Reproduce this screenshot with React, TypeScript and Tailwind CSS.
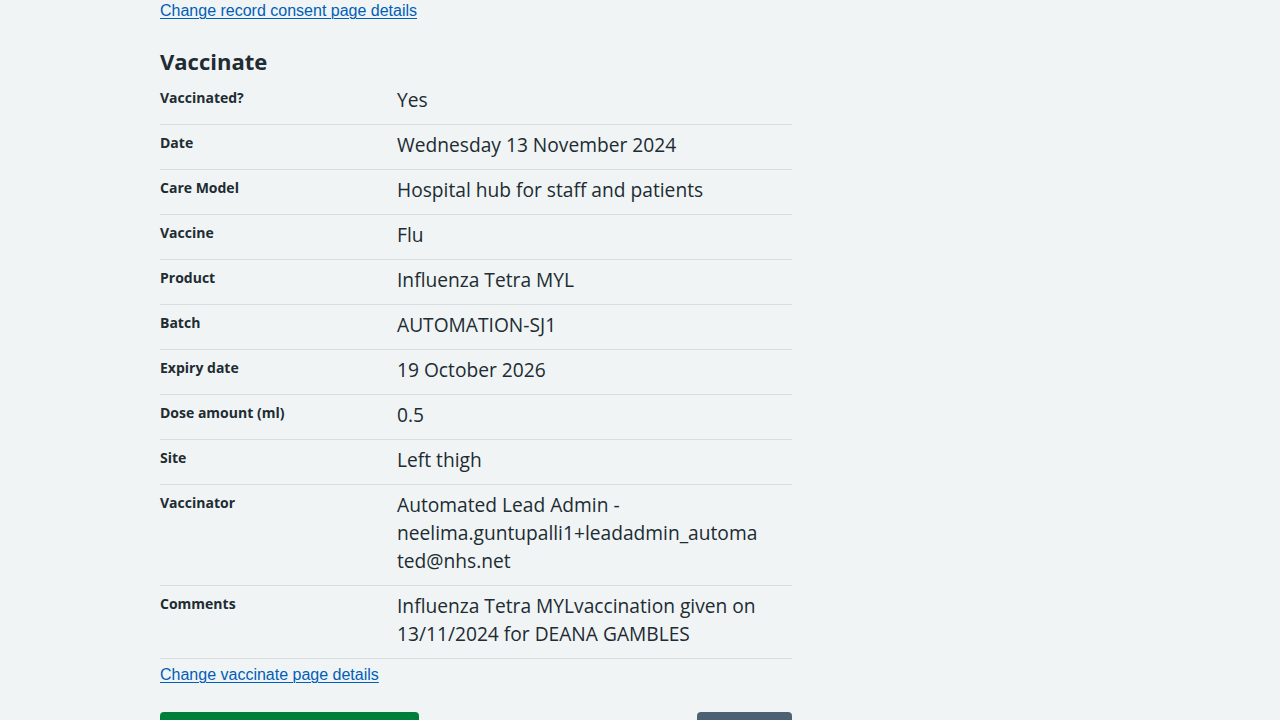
const rows: { label: string; value: string[] }[] = [
  { label: "Vaccinated?", value: ["Yes"] },
  { label: "Date", value: ["Wednesday 13 November 2024"] },
  { label: "Care Model", value: ["Hospital hub for staff and patients"] },
  { label: "Vaccine", value: ["Flu"] },
  { label: "Product", value: ["Influenza Tetra MYL"] },
  { label: "Batch", value: ["AUTOMATION-SJ1"] },
  { label: "Expiry date", value: ["19 October 2026"] },
  { label: "Dose amount (ml)", value: ["0.5"] },
  { label: "Site", value: ["Left thigh"] },
  {
    label: "Vaccinator",
    value: ["Automated Lead Admin -", "neelima.guntupalli1+leadadmin_automa", "ted@nhs.net"],
  },
  {
    label: "Comments",
    value: ["Influenza Tetra MYLvaccination given on", "13/11/2024 for DEANA GAMBLES"],
  },
];

const frutiger = "font-['Open_Sans','Noto_Sans',sans-serif]";
const linkCls =
  "font-['Liberation_Sans',Arial,sans-serif] text-base leading-5 text-[#005eb8] underline underline-offset-[2px] decoration-1";

function SummaryRow({ label, value }: { label: string; value: string[] }) {
  return (
    <div className="flex border-b border-[#d8dde0]">
      <dt className="w-[237px] shrink-0 pt-[8px] text-[14px] font-bold leading-5">{label}</dt>
      <dd className="flex-1 pt-[6px] pb-[10px] text-[19.2px] leading-7">
        {value.map((line, i) => (
          <div key={i}>{line}</div>
        ))}
      </dd>
    </div>
  );
}

export default function App() {
  return (
    <div className={`min-h-screen bg-[#f0f4f5] text-[#212b32] ${frutiger}`}>
      <div className="ml-[160px] w-[632px] pt-px">
        <a href="#" className={`${linkCls} block w-fit`}>
          Change record consent page details
        </a>
        <h2 className="mt-[24px] mb-[3px] text-[22px] font-bold leading-8">Vaccinate</h2>
        <dl>
          {rows.map((r) => (
            <SummaryRow key={r.label} label={r.label} value={r.value} />
          ))}
        </dl>
        <a href="#" className={`${linkCls} mt-[6px] block w-fit`}>
          Change vaccinate page details
        </a>
        <div className="mt-[27px] flex justify-between">
          <button
            aria-label="Confirm and save"
            className="h-[50px] w-[259px] rounded-[4px] bg-[#007f3b] shadow-[0_4px_0_#00401e]"
          />
          <button
            aria-label="Back"
            className="h-[50px] w-[95px] rounded-[4px] bg-[#4c6272] shadow-[0_4px_0_#263139]"
          />
        </div>
      </div>
    </div>
  );
}
